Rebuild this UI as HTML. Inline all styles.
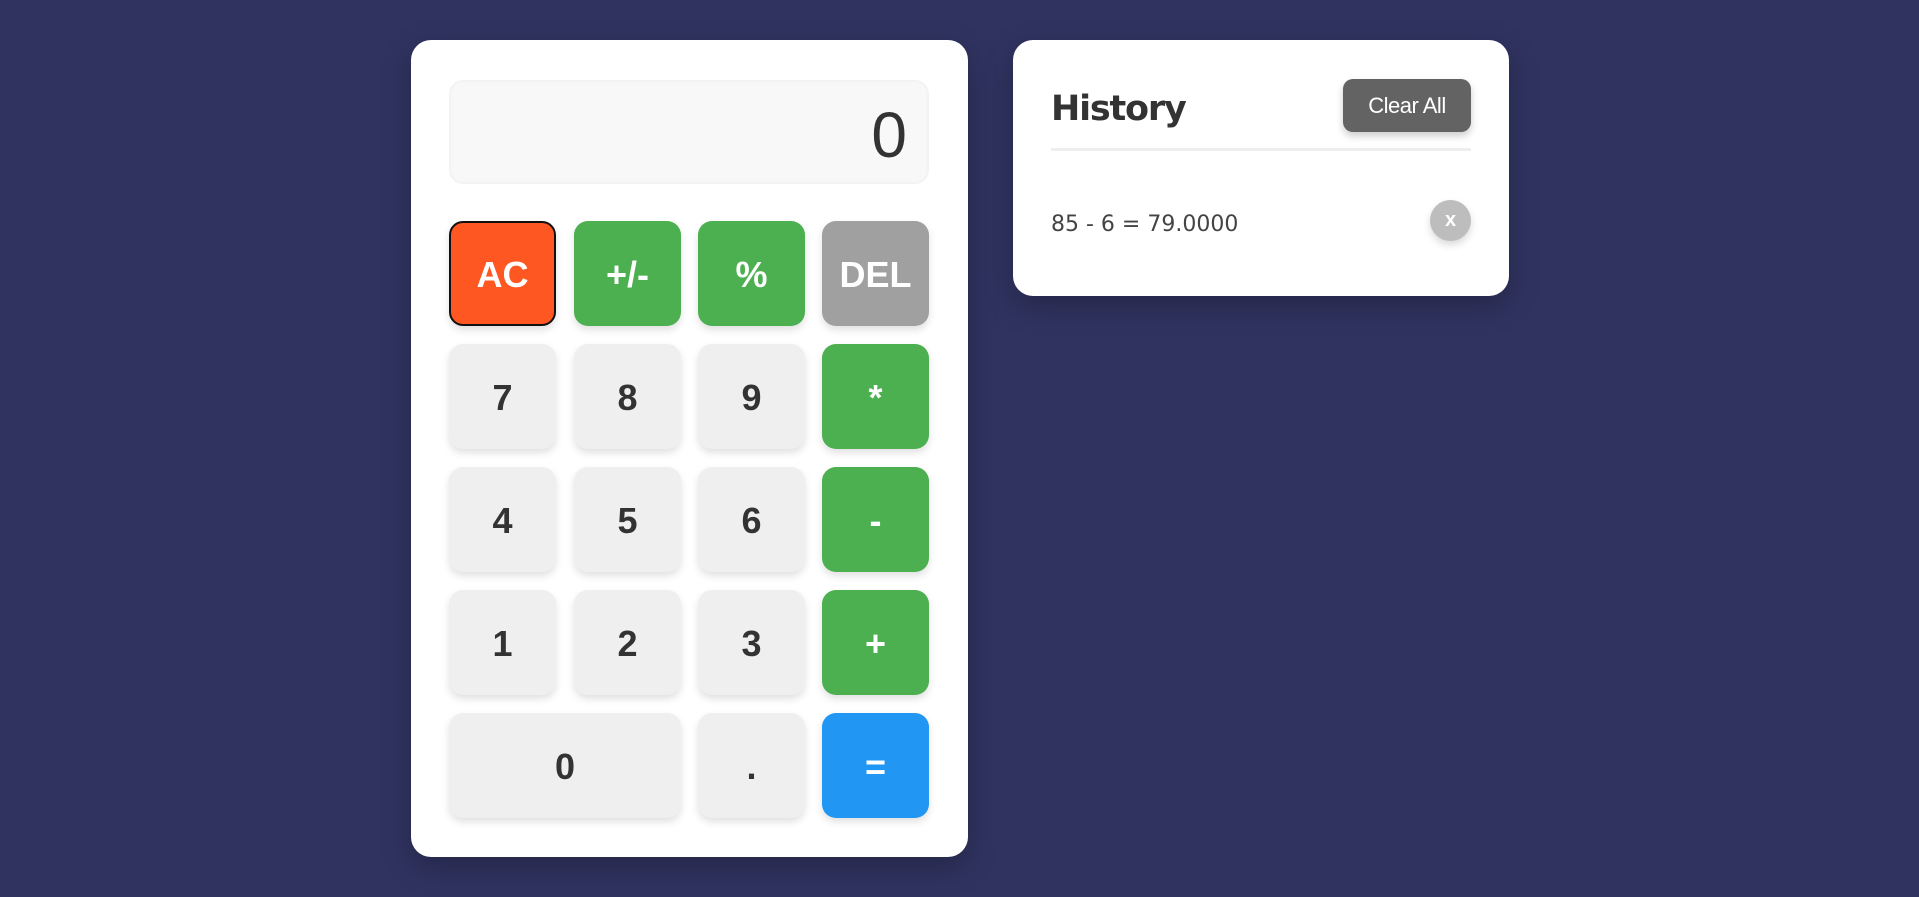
<!DOCTYPE html>
<html><head><meta charset="utf-8"><style>
html,body{margin:0;padding:0;}
body{width:1919px;height:897px;background:#303360;position:relative;overflow:hidden;font-family:"Liberation Sans",Arial,sans-serif;}
.card{position:absolute;background:#fff;border-radius:20px;box-shadow:0 10px 30px rgba(0,0,0,.25);}
.calc{left:411px;top:40px;width:557px;height:817px;}
.disp{position:absolute;left:38px;top:40px;width:480px;height:104px;background:#f8f8f8;border-radius:14px;box-shadow:inset 0 0 4px rgba(0,0,0,.06);box-sizing:border-box;text-align:right;padding-right:22px;font-size:64px;line-height:110px;color:#333;font-family:"Liberation Sans",sans-serif;font-weight:normal;}
.b{position:absolute;width:107px;height:105px;border-radius:14px;background:#efefef;color:#333;font-weight:bold;font-size:36px;display:flex;align-items:center;justify-content:center;box-shadow:0 4px 8px rgba(0,0,0,.12);box-sizing:border-box;padding-top:2px;}
.g{background:#4caf50;color:#fff}
.hist{left:1013px;top:40px;width:496px;height:256px;}
.hist h2{position:absolute;left:38px;top:49px;margin:0;font-size:35px;color:#333;font-family:"DejaVu Sans","Liberation Sans",sans-serif;font-weight:bold;letter-spacing:-1.2px;}
.clr{position:absolute;left:330px;top:39px;width:128px;height:53px;background:#636363;color:#fff;border-radius:10px;font-size:22px;display:flex;align-items:center;justify-content:center;box-shadow:0 4px 8px rgba(0,0,0,.2);letter-spacing:-0.5px;}
.line{position:absolute;left:38px;top:108px;width:420px;height:3px;background:#eee;}
.item{position:absolute;left:38px;top:172px;font-size:22px;color:#444;font-family:"DejaVu Sans","Liberation Sans",sans-serif;}
.x{position:absolute;left:417px;top:160px;width:41px;height:41px;border-radius:50%;background:#bdbdbd;color:#fff;font-weight:bold;font-size:20px;display:flex;align-items:center;justify-content:center;box-shadow:0 4px 8px rgba(0,0,0,.15);}
</style></head><body>
<div class="card calc">
<div class="disp">0</div>
<div class="b" style="left:38px;top:181px;background:#ff5722;color:#fff;border:2px solid #111">AC</div>
<div class="b g" style="left:163px;top:181px">+/-</div>
<div class="b g" style="left:287px;top:181px">%</div>
<div class="b" style="left:411px;top:181px;background:#a0a0a0;color:#fff">DEL</div>
<div class="b" style="left:38px;top:304px">7</div>
<div class="b" style="left:163px;top:304px">8</div>
<div class="b" style="left:287px;top:304px">9</div>
<div class="b g" style="left:411px;top:304px">*</div>
<div class="b" style="left:38px;top:427px">4</div>
<div class="b" style="left:163px;top:427px">5</div>
<div class="b" style="left:287px;top:427px">6</div>
<div class="b g" style="left:411px;top:427px">-</div>
<div class="b" style="left:38px;top:550px">1</div>
<div class="b" style="left:163px;top:550px">2</div>
<div class="b" style="left:287px;top:550px">3</div>
<div class="b g" style="left:411px;top:550px">+</div>
<div class="b" style="left:38px;top:673px;width:232px">0</div>
<div class="b" style="left:287px;top:673px">.</div>
<div class="b" style="left:411px;top:673px;background:#2196f3;color:#fff">=</div>
</div>
<div class="card hist">
<h2>History</h2>
<div class="clr">Clear All</div>
<div class="line"></div>
<div class="item">85 - 6 = 79.0000</div>
<div class="x">x</div>
</div>
</body></html>
